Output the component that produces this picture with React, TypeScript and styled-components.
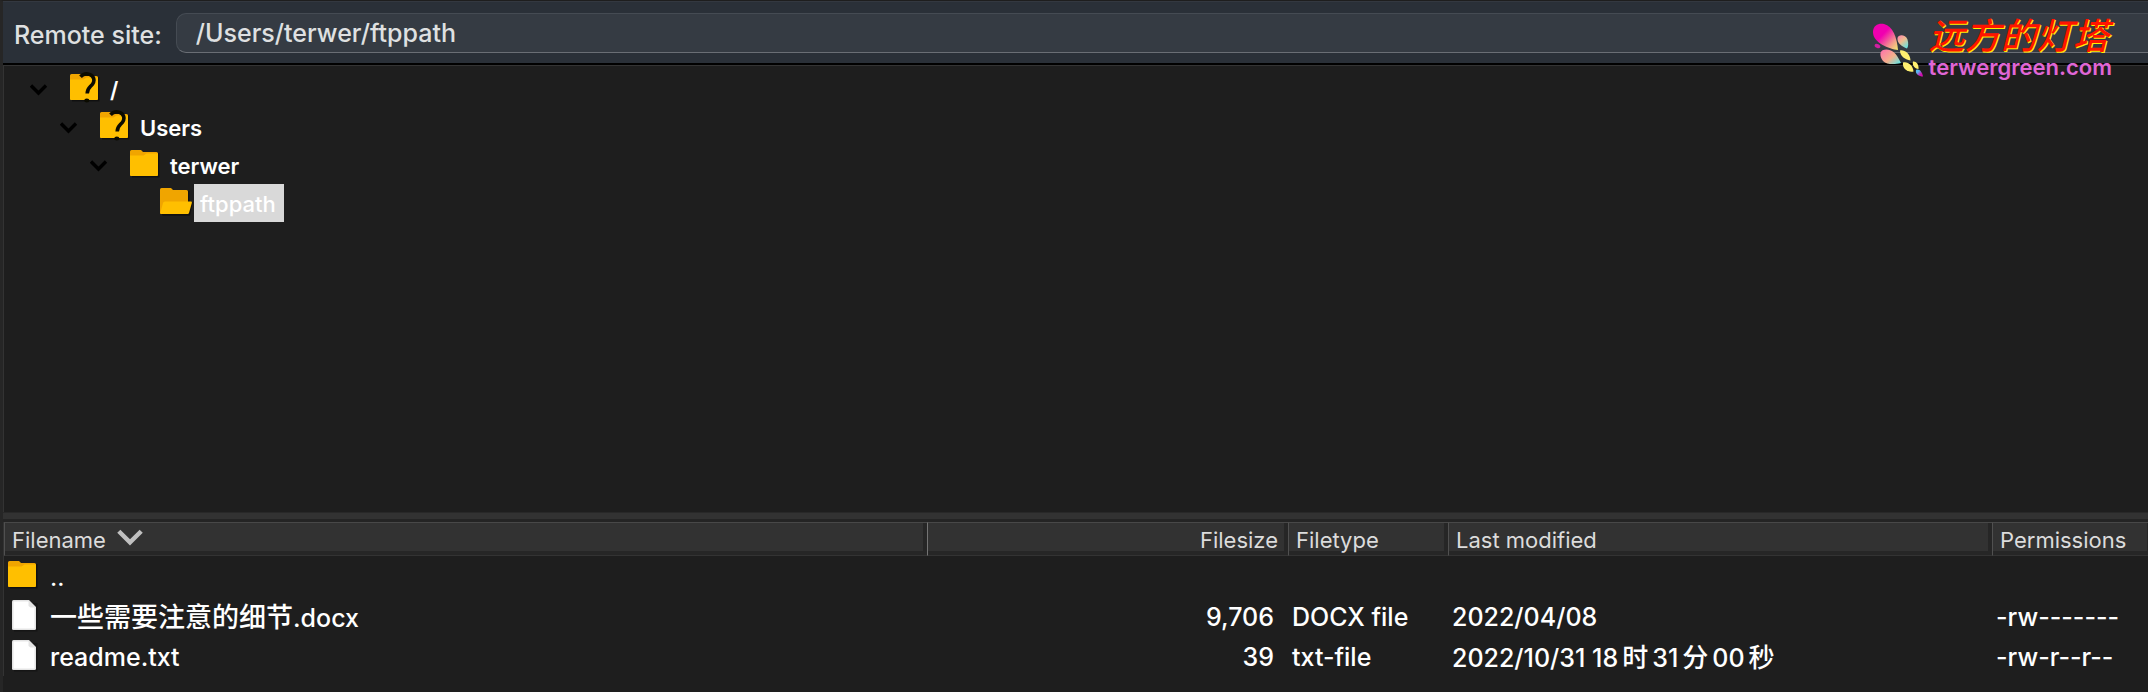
import React from "react";
import styled, { createGlobalStyle } from "styled-components";

const GlobalStyle = createGlobalStyle`
  *, *::before, *::after { box-sizing: border-box; }
  body {
    margin: 0;
    background: #1e1e1e;
    color: #ffffff;
    font-family: Inter, "Noto Sans CJK SC", sans-serif;
  }
`;

const Window = styled.div`
  position: relative;
  display: flex;
  flex-direction: column;
  min-height: 100vh;
  border-top: 1px solid #1e1e1e;
  border-left: 3px solid #262626;
  overflow: hidden;
`;

const SiteBar = styled.form`
  display: flex;
  align-items: center;
  height: 64px;
  padding: 0 0 0 11px;
  gap: 14px;
  background: #2a3038;
  border-top: 1px solid #333840;
  border-bottom: 2px solid #000000;
`;

const SiteLabel = styled.label`
  padding-top: 4px;
  font-size: 25px;
  line-height: 32px;
  font-weight: 500;
  color: #dfe0e1;
  white-space: nowrap;
`;

const SiteInput = styled.input`
  flex: 1;
  min-width: 0;
  height: 40px;
  padding: 0 19px;
  font-family: inherit;
  font-size: 25px;
  font-weight: 500;
  color: #dfe0e1;
  background: #353b43;
  border: 1px solid #454b53;
  border-bottom-color: #6a6e75;
  border-right: 0;
  border-radius: 10px 0 0 10px;
  outline: none;
`;

const Tree = styled.ul`
  flex: 1;
  margin: 0;
  padding: 4px 0 0 26px;
  list-style: none;
  border-top: 1px solid #333333;
  border-left: 1px solid #333333;
`;

const Branch = styled.ul`
  margin: 0;
  padding: 0 0 0 30px;
  list-style: none;
`;

const TreeRow = styled.div`
  display: flex;
  height: 38px;
`;

const Toggle = styled.button`
  display: flex;
  flex: none;
  width: 40px;
  padding: 14px 0 0;
  background: none;
  border: 0;
`;

const Spacer = styled.span`
  flex: none;
  width: 40px;
`;

const TreeIcon = styled.span`
  flex: none;
  width: 34px;
  padding-top: 2px;
`;

const TreeLabel = styled.span<{ $selected?: boolean }>`
  padding: 2px 8px 0 6px;
  font-size: 22px;
  line-height: 36px;
  font-weight: ${(p) => (p.$selected ? 500 : 600)};
  background: ${(p) => (p.$selected ? "#d9d9d9" : "transparent")};
`;

const Splitter = styled.div`
  height: 10px;
  background: #323232;
  border-top: 1px solid #282828;
  border-bottom: 3px solid #242424;
`;

const FileTable = styled.table`
  width: 100%;
  table-layout: fixed;
  border-collapse: separate;
  border-spacing: 0;
  margin-bottom: 16px;
  border-left: 1px solid #333333;
`;

const HeadCell = styled.th<{ $right?: boolean }>`
  height: 34px;
  padding: 2px 10px 0 7px;
  font-size: 22px;
  line-height: 24px;
  font-weight: 400;
  white-space: nowrap;
  color: #dcdcdc;
  text-align: ${(p) => (p.$right ? "right" : "left")};
  background: #323232;
  border-top: 1px solid #484848;
  border-left: 1px solid ${(p) => (p.$right ? "#747474" : "#505050")};
  border-bottom: 1px solid #333333;
  box-shadow: inset -4px -4px 0 #262626;

  &:last-child {
    box-shadow: inset -1px -4px 0 #262626;
  }
`;

const SortButton = styled.button`
  display: flex;
  gap: 11px;
  padding: 0;
  font: inherit;
  color: inherit;
  background: none;
  border: 0;
`;

const Cell = styled.td<{ $right?: boolean }>`
  height: 40px;
  padding: 2px 14px 0 4px;
  font-size: 25px;
  line-height: 32px;
  font-weight: 500;
  white-space: nowrap;
  text-align: ${(p) => (p.$right ? "right" : "left")};
`;

const FileName = styled.span<{ $parent?: boolean }>`
  display: flex;
  align-items: center;
  font-weight: ${(p) => (p.$parent ? 400 : 500)};
`;

const FileIcon = styled.span`
  display: flex;
  flex: none;
  width: 42px;
  padding-bottom: 4px;
`;

const Han = styled.span<{ $spaced?: boolean }>`
  font-family: "Noto Sans CJK SC", sans-serif;
  font-size: ${(p) => (p.$spaced ? 26 : 27)}px;
  line-height: 32px;
  padding: ${(p) => (p.$spaced ? "0 4px" : "0")};
`;

const Brand = styled.a`
  position: absolute;
  top: 17px;
  right: 36px;
  display: flex;
  color: #e066d6;
  text-decoration: none;
`;

const BrandText = styled.span`
  display: flex;
  flex-direction: column;
  padding-left: 6px;
`;

const BrandName = styled.span`
  font-size: 36px;
  line-height: 36px;
  font-style: italic;
  font-weight: 500;
  color: #ff1400;
  text-shadow: 1px 1px 0 #ffee00;
`;

const BrandHost = styled.span`
  padding-top: 1px;
  font-size: 22px;
  line-height: 24px;
  font-weight: 600;
`;

function ChevronIcon() {
  return (
    <svg width="18" height="12" viewBox="0 0 18 12" fill="none" aria-hidden="true">
      <path d="M1 1.500 8.500 9 16 1.500" stroke="#000" strokeWidth="3.400" />
    </svg>
  );
}

function SortIcon() {
  return (
    <svg width="26" height="20" viewBox="0 0 26 20" fill="none" aria-hidden="true">
      <path d="M1.800 3.200 13 14.400 24.200 3.200" stroke="#c0c0c0" strokeWidth="4.400" />
    </svg>
  );
}

function FolderIcon({ unknown, open }: { unknown?: boolean; open?: boolean }) {
  return (
    <svg width="34" height="32" viewBox="0 0 34 32" fill="none" aria-hidden="true">
      <path d="M2 5h27.500v24.500H2z" fill="#101010" />
      <path d="M0 3.500Q0 2 1.500 2H11l2 2h13.500Q28 4 28 5.500V26.500Q28 28 26.500 28H1.500Q0 28 0 26.500Z" fill="#f0a500" />
      {open ? (
        <>
          <path d="M28 16h5l-3 13.500H3V28h25Z" fill="#101010" />
          <path d="M5 15.500h26q1.200 0 .9 1.200L29 27q-.3 1-1.300 1H1.300Q0 28 .3 26.800L3 17q.4-1.500 2-1.500Z" fill="#ffbf00" />
        </>
      ) : (
        <path d="M0 7.500h13.500L16.500 5.500H28v21q0 1.500-1.500 1.500h-25Q0 28 0 26.500Z" fill="#ffbf00" />
      )}
      {unknown && (
        <>
          <path d="M10.500 4.800C13 2 17 1.600 19.500 2.400c4.500 1.500 5.600 6.300 3 9.800-2.300 3-5.300 4-5.300 9.300" stroke="#0b0b00" strokeWidth="3.600" />
          <ellipse cx="16.800" cy="28.400" rx="2.600" ry="2" fill="#0b0b00" />
        </>
      )}
    </svg>
  );
}

function PageIcon() {
  return (
    <svg width="30" height="33" viewBox="0 0 30 33" aria-hidden="true">
      <path d="M6 4h23.500v28.500H6z" fill="#151515" />
      <path d="M4 2.500Q4 1 5.500 1H21l7 7v21.500q0 1.500-1.500 1.500h-21Q4 31 4 29.500Z" fill="#e4e4e4" />
      <path d="M5.500 2.500H20.500v4.500l2 1.500h4v21h-21Z" fill="#fff" />
    </svg>
  );
}

function ButterflyLogo() {
  return (
    <svg width="52" height="59" viewBox="0 -1 52 59" aria-hidden="true">
      <defs>
        <linearGradient id="wing" x1="0" y1="0" x2="1" y2="1">
          <stop offset="0.4" stopColor="#f000b0" />
          <stop offset="0.75" stopColor="#f49a8c" />
          <stop offset="1" stopColor="#f2ee70" />
        </linearGradient>
        <linearGradient id="upperWing" x1="0" y1="0" x2="0.7" y2="1">
          <stop offset="0" stopColor="#ff7fae" />
          <stop offset="0.5" stopColor="#efbf90" />
          <stop offset="1" stopColor="#6fe0dc" />
        </linearGradient>
        <linearGradient id="lowerWing" x1="0" y1="0" x2="1" y2="0.8">
          <stop offset="0" stopColor="#ff6fae" />
          <stop offset="0.6" stopColor="#f4b08c" />
          <stop offset="1" stopColor="#6fe0dc" />
        </linearGradient>
        <linearGradient id="tail" x1="0" y1="0" x2="1" y2="1">
          <stop offset="0.3" stopColor="#58b8f0" />
          <stop offset="0.7" stopColor="#d010b0" />
        </linearGradient>
      </defs>
      <path d="M2 13C2 6 8 4 13 5c9 2 13 14 14 26C18 30 2 24 2 13Z" fill="url(#wing)" />
      <path d="M26.500 19c1-4 8-3.500 10 1.500 1 3 1 7-.5 9-5-2-10-5-9.500-10.500Z" fill="url(#upperWing)" />
      <ellipse cx="6.500" cy="27" rx="3" ry="2" fill="#d020a0" transform="rotate(25 6.500 27)" />
      <path d="M9.500 34c1-4.500 9-4.500 13-1 3 2.500 5 6 7.500 11-6 1.500-14 2-18-2-2-2.500-3-5.500-2.500-8Z" fill="url(#lowerWing)" />
      <path d="M29 31.500c4-1 10 2.500 10.500 10-6-1-10.500-4.500-10.500-10Z" fill="#fff070" />
      <path d="M32 43.500c4-1.500 10 2 10.500 9C37 53.500 31 50 32 43.500Z" fill="#fff070" />
      <path d="M42 42.500c3-.5 6 2.500 5.500 7.500-4-.5-6.500-3.500-5.500-7.500Z" fill="#fff070" />
      <path d="M45 51c3-1.500 6 1.500 7 6.500-4 0-8-2.500-7-6.500Z" fill="url(#tail)" />
    </svg>
  );
}

interface TreeNode {
  name: string;
  unknown?: boolean;
  children?: TreeNode[];
}

const root: TreeNode = {
  name: "/",
  unknown: true,
  children: [
    {
      name: "Users",
      unknown: true,
      children: [{ name: "terwer", children: [{ name: "ftppath" }] }],
    },
  ],
};

function TreeItem({ node }: { node: TreeNode }) {
  const leaf = !node.children;
  return (
    <li>
      <TreeRow>
        {leaf ? (
          <Spacer />
        ) : (
          <Toggle type="button" aria-label={`Collapse ${node.name}`} aria-expanded>
            <ChevronIcon />
          </Toggle>
        )}
        <TreeIcon>
          <FolderIcon unknown={node.unknown} open={leaf} />
        </TreeIcon>
        <TreeLabel $selected={leaf}>{node.name}</TreeLabel>
      </TreeRow>
      {node.children && (
        <Branch>
          {node.children.map((child) => (
            <TreeItem key={child.name} node={child} />
          ))}
        </Branch>
      )}
    </li>
  );
}

/* Sets runs of Chinese characters in their own face and size. */
function MixedText({ text, spaced }: { text: string; spaced?: boolean }) {
  return (
    <span>
      {text.split(/([\u4e00-\u9fff]+)/).map((run, i) =>
        i % 2 ? (
          <Han key={i} $spaced={spaced}>
            {run}
          </Han>
        ) : (
          run
        )
      )}
    </span>
  );
}

const files = [
  { name: "..", folder: true, size: "", type: "", modified: "", permissions: "" },
  { name: "一些需要注意的细节.docx", size: "9,706", type: "DOCX file", modified: "2022/04/08", permissions: "-rw-------" },
  { name: "readme.txt", size: "39", type: "txt-file", modified: "2022/10/31 18时31分00秒", permissions: "-rw-r--r--" },
];

export default function App() {
  return (
    <>
      <GlobalStyle />
      <Window>
        <SiteBar onSubmit={(e) => e.preventDefault()}>
          <SiteLabel htmlFor="remote-site">Remote site:</SiteLabel>
          <SiteInput id="remote-site" type="text" defaultValue="/Users/terwer/ftppath" />
        </SiteBar>
        <Tree>
          <TreeItem node={root} />
        </Tree>
        <Splitter />
        <FileTable>
          <colgroup>
            <col />
            <col style={{ width: 361 }} />
            <col style={{ width: 160 }} />
            <col style={{ width: 544 }} />
            <col style={{ width: 156 }} />
          </colgroup>
          <thead>
            <tr>
              <HeadCell>
                <SortButton type="button">
                  Filename
                  <SortIcon />
                </SortButton>
              </HeadCell>
              <HeadCell $right>Filesize</HeadCell>
              <HeadCell>Filetype</HeadCell>
              <HeadCell>Last modified</HeadCell>
              <HeadCell>Permissions</HeadCell>
            </tr>
          </thead>
          <tbody>
            {files.map((file) => (
              <tr key={file.name}>
                <Cell>
                  <FileName $parent={file.folder}>
                    <FileIcon>{file.folder ? <FolderIcon /> : <PageIcon />}</FileIcon>
                    <MixedText text={file.name} />
                  </FileName>
                </Cell>
                <Cell $right>{file.size}</Cell>
                <Cell>{file.type}</Cell>
                <Cell>
                  <MixedText text={file.modified} spaced />
                </Cell>
                <Cell>{file.permissions}</Cell>
              </tr>
            ))}
          </tbody>
        </FileTable>
        <Brand href="#">
          <ButterflyLogo />
          <BrandText>
            <BrandName>远方的灯塔</BrandName>
            <BrandHost>terwergreen.com</BrandHost>
          </BrandText>
        </Brand>
      </Window>
    </>
  );
}
